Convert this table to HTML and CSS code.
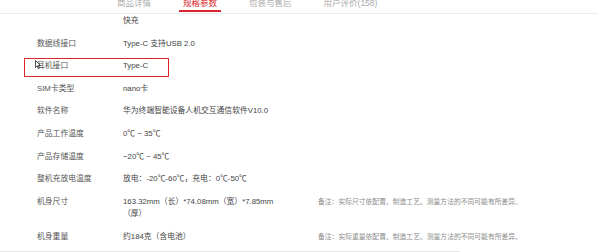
FILE: index.html
```html
<!DOCTYPE html>
<html lang="zh-CN">
<head>
<meta charset="utf-8">
<link rel="stylesheet" href="styles.css">
</head>
<body>
<div class="page">
  <nav class="tabs">
    <span class="tab">商品详情</span>
    <span class="tab active">规格参数</span>
    <span class="tab">包装与售后</span>
    <span class="tab">用户评价(158)</span>
  </nav>
  <div class="specs">
    <div class="row first">
      <div class="label"></div>
      <div class="value">快充</div>
      <div class="note"></div>
    </div>
    <div class="row">
      <div class="label">数据线接口</div>
      <div class="value">Type-C 支持USB 2.0</div>
      <div class="note"></div>
    </div>
    <div class="row marked">
      <div class="label">耳机接口</div>
      <div class="value">Type-C</div>
      <div class="note"></div>
      <span class="highlight"></span>
      <svg class="cursor" width="6" height="9" viewBox="0 0 6 9"><path d="M0.5 0.5 L0.5 7.5 L2.2 5.9 L3.4 8.5 L4.4 8.1 L3.2 5.5 L5.5 5.5 Z" fill="#fff" stroke="#222" stroke-width="0.8" stroke-linejoin="round"/></svg>
    </div>
    <div class="row">
      <div class="label">SIM卡类型</div>
      <div class="value">nano卡</div>
      <div class="note"></div>
    </div>
    <div class="row">
      <div class="label">软件名称</div>
      <div class="value">华为终端智能设备人机交互通信软件V10.0</div>
      <div class="note"></div>
    </div>
    <div class="row">
      <div class="label">产品工作温度</div>
      <div class="value">0℃ ~ 35℃</div>
      <div class="note"></div>
    </div>
    <div class="row">
      <div class="label">产品存储温度</div>
      <div class="value">−20℃ ~ 45℃</div>
      <div class="note"></div>
    </div>
    <div class="row">
      <div class="label">整机充放电温度</div>
      <div class="value">放电：-20℃-60℃，充电：0℃-50℃</div>
      <div class="note"></div>
    </div>
    <div class="row">
      <div class="label">机身尺寸</div>
      <div class="value">163.32mm（长）*74.08mm（宽）*7.85mm（厚）</div>
      <div class="note">备注：实际尺寸依配置、制造工艺、测量方法的不同可能有所差异。</div>
    </div>
    <div class="row">
      <div class="label">机身重量</div>
      <div class="value">约184克（含电池）</div>
      <div class="note">备注：实际重量依配置、制造工艺、测量方法的不同可能有所差异。</div>
    </div>
  </div>
</div>
</body>
</html>
```

FILE: styles.css
```css
html, body {
  margin: 0;
  padding: 0;
  background: #fff;
}
body {
  font-family: "Liberation Sans", "Noto Sans CJK SC", sans-serif;
  overflow: hidden;
  width: 600px;
  height: 252px;
}
.page {
  width: 600px;
}
.tabs {
  display: flex;
  gap: 24px;
  padding-left: 113px;
  margin-top: -1px;
  height: 15px;
  box-sizing: border-box;
  border-bottom: 1px solid #ebebeb;
  width: 598px;
}
.tab {
  font-size: 8.5px;
  line-height: 9px;
  color: #aaa;
  padding: 0 4px 1px;
  border-bottom: 2px solid transparent;
  height: 10px;
  white-space: nowrap;
}
.tab.active {
  color: #d9262c;
  border-bottom-color: #d9262c;
}
.specs {
  width: 460px;
  border-bottom: 1px solid #e6e6e6;
  padding-bottom: 2px;
}
.row {
  display: grid;
  grid-template-columns: 86px 155px 1fr;
  padding: 5px 0 5px 37px;
  font-size: 7.8px;
  line-height: 12.6px;
  position: relative;
}
.row.first {
  padding-top: 1px;
}
.label {
  color: #555;
  white-space: nowrap;
}
.value {
  color: #444;
}
.note {
  font-size: 6.8px;
  color: #8c8c8c;
  white-space: nowrap;
  margin-left: 40px;
}
.highlight {
  position: absolute;
  left: 24px;
  top: 3px;
  width: 145px;
  height: 19px;
  box-sizing: border-box;
  border: 1.5px solid #e2252c;
}
.cursor {
  position: absolute;
  left: 35px;
  top: 5px;
}
```
